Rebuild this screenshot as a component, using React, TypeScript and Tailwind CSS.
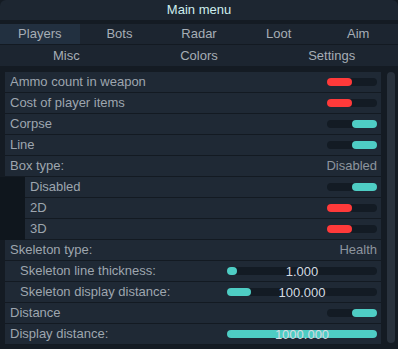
import React from "react";

type Row =
  | { kind: "toggle"; label: string; on: boolean; indent?: number }
  | { kind: "combo"; label: string; value: string }
  | { kind: "slider"; label: string; value: string; fill: number; indent?: number };

const rows: Row[] = [
  { kind: "toggle", label: "Ammo count in weapon", on: false },
  { kind: "toggle", label: "Cost of player items", on: false },
  { kind: "toggle", label: "Corpse", on: true },
  { kind: "toggle", label: "Line", on: true },
  { kind: "combo", label: "Box type:", value: "Disabled" },
  { kind: "toggle", label: "Disabled", on: true, indent: 2 },
  { kind: "toggle", label: "2D", on: false, indent: 2 },
  { kind: "toggle", label: "3D", on: false, indent: 2 },
  { kind: "combo", label: "Skeleton type:", value: "Health" },
  { kind: "slider", label: "Skeleton line thickness:", value: "1.000", fill: 10, indent: 1 },
  { kind: "slider", label: "Skeleton display distance:", value: "100.000", fill: 24, indent: 1 },
  { kind: "toggle", label: "Distance", on: true },
  { kind: "slider", label: "Display distance:", value: "1000.000", fill: 150 },
];

function Toggle({ on }: { on: boolean }) {
  return (
    <div className="w-[50px] h-[8px] rounded-full bg-[#131b24] flex">
      <div
        className={`w-[25px] h-full rounded-full ${on ? "ml-auto bg-[#4ecdc4]" : "bg-[#ff3a3a]"}`}
      />
    </div>
  );
}

function Slider({ value, fill }: { value: string; fill: number }) {
  return (
    <div className="relative w-[150px] h-[8px] rounded-full bg-[#131b24]">
      <div className="h-full rounded-full bg-[#4ecdc4]" style={{ width: `${fill}px` }} />
      <div className="absolute inset-0 flex items-center justify-center text-[#d4dbe2] leading-none">
        {value}
      </div>
    </div>
  );
}

function OptionRow({ row }: { row: Row }) {
  const indent = "indent" in row ? row.indent : undefined;
  return (
    <div
      className={`h-[21px] border-b border-[#131a22] bg-[#1f2935] flex items-center pr-[4px] ${
        indent === 2 ? "ml-[20px] pl-[5px]" : indent === 1 ? "pl-[15px]" : "pl-[5px]"
      }`}
    >
      <span className="text-[#9ea6af] flex-1 truncate">{row.label}</span>
      {row.kind === "toggle" && <Toggle on={row.on} />}
      {row.kind === "combo" && <span className="text-[#8d959e]">{row.value}</span>}
      {row.kind === "slider" && <Slider value={row.value} fill={row.fill} />}
    </div>
  );
}

export default function App() {
  const tabs1 = ["Players", "Bots", "Radar", "Loot", "Aim"];
  const tabs2 = ["Misc", "Colors", "Settings"];
  return (
    <div className="w-[398px] h-[349px] overflow-hidden bg-[#141b23] font-['Liberation_Sans',Arial,sans-serif] text-[13px]">
      <div className="h-[20px] rounded-t-[6px] bg-[#1d2631] flex items-center justify-center text-[#cdeeee]">
        Main menu
      </div>
      <div className="h-[4px]" />
      <div className="h-[21px] grid grid-cols-5 bg-[#1c2530] border-b border-[#131a22]">
        {tabs1.map((t, i) => (
          <div
            key={t}
            className={`flex items-center justify-center text-[#a6aeb6] ${i === 0 ? "bg-[#223040]" : ""}`}
          >
            {t}
          </div>
        ))}
      </div>
      <div className="h-[21px] grid grid-cols-3 bg-[#1c2530]">
        {tabs2.map((t) => (
          <div key={t} className="flex items-center justify-center text-[#a6aeb6]">
            {t}
          </div>
        ))}
      </div>
      <div className="h-[6px]" />
      <div className="flex pl-[5px]">
        <div className="w-[376px]">
          {rows.slice(0, 5).map((r) => (
            <OptionRow key={r.label} row={r} />
          ))}
          <div className="bg-[#0f161d] -ml-[5px] pl-[5px]">
            {rows.slice(5, 8).map((r) => (
              <OptionRow key={r.label} row={r} />
            ))}
          </div>
          {rows.slice(8).map((r) => (
            <OptionRow key={r.label} row={r} />
          ))}
        </div>
        <div className="ml-[6px] w-[8px] h-[271px] rounded-[4px] bg-[#29323d]" />
      </div>
    </div>
  );
}
